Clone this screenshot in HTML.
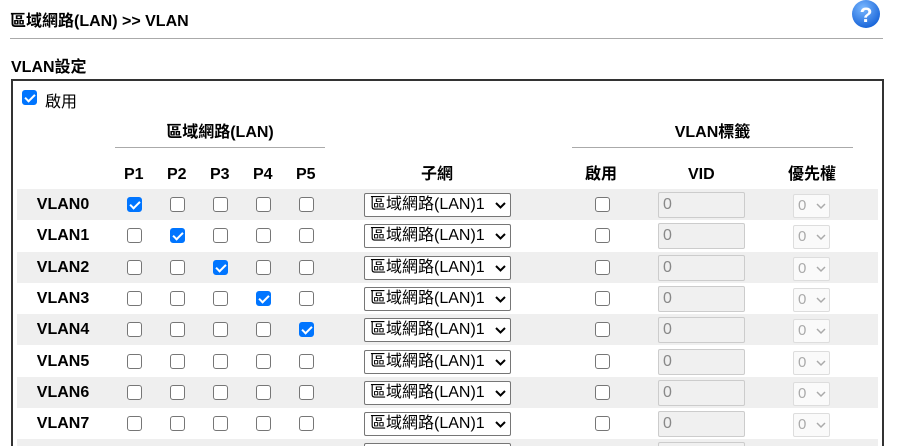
<!DOCTYPE html>
<html style="width:902px;height:446px;overflow:hidden"><head><meta charset="utf-8"><style>
*{box-sizing:border-box;margin:0;padding:0}
body{width:902px;height:446px;overflow:hidden;background:#fff;font-family:"Liberation Sans","Noto Sans CJK TC",sans-serif;color:#000;position:relative}
.a{position:absolute}
.b{font-weight:bold}
.cb{position:absolute;width:15px;height:15px;border:1px solid #767676;border-radius:3px;background:#fff}
.cb.on{background:#0075ff;border-color:#0075ff}
.cb.on:after{content:"";position:absolute;left:4px;top:1px;width:4px;height:8px;border:solid #fff;border-width:0 2px 2px 0;transform:rotate(45deg)}
.row{position:absolute;left:17px;width:861px;height:31px}
.sel{position:absolute;left:347px;top:4px;width:147px;height:24px;border:1px solid #767676;border-radius:2px;background:#fff;font-size:16px;line-height:22px;padding-left:5px}
.sel svg{position:absolute;right:4px;top:8px}
.vid{position:absolute;left:641px;top:3px;width:87px;height:26px;border:1px solid #ccc;border-radius:2px;background:#f0f0f0;color:#888;font-size:16px;line-height:24px;padding-left:4px}
.pr{position:absolute;left:776px;top:5px;width:37px;height:24px;border:1px solid #ddd;border-radius:2px;background:#fafafa;color:#aaa;font-size:15px;line-height:22px;padding-left:4px}
.pr svg{position:absolute;right:3px;top:8px}
.lbl{position:absolute;left:0;width:92px;text-align:center;font-weight:bold;font-size:16px;line-height:31px}
</style></head><body>
<div class="a b" style="left:10px;top:7px;font-size:16px">區域網路(LAN) &gt;&gt; VLAN</div>
<svg class="a" style="left:852px;top:0" width="28" height="28"><defs><radialGradient id="g" cx="40%" cy="30%" r="70%"><stop offset="0" stop-color="#7ab8ff"/><stop offset="1" stop-color="#1a66d9"/></radialGradient></defs><circle cx="14" cy="14" r="14" fill="url(#g)"/><text x="14" y="22" text-anchor="middle" fill="#fff" font-size="21" font-family="Liberation Sans" font-weight="bold">?</text></svg>
<div class="a" style="left:10px;top:38px;width:873px;height:1px;background:#aaa"></div>
<div class="a b" style="left:11px;top:53px;font-size:16px">VLAN設定</div>
<div class="a" style="left:11px;top:79px;width:873px;height:380px;border:2px solid #333"></div>
<div class="cb on" style="left:22px;top:90px"></div>
<div class="a" style="left:45px;top:88px;font-size:16px">啟用</div>
<div class="a b" style="left:115px;top:118px;width:210px;text-align:center;font-size:16px">區域網路(LAN)</div>
<div class="a" style="left:115px;top:147px;width:210px;height:1px;background:#aaa"></div>
<div class="a b" style="left:572px;top:118px;width:281px;text-align:center;font-size:16px">VLAN標籤</div>
<div class="a" style="left:572px;top:147px;width:281px;height:1px;background:#aaa"></div>
<div class="a b" style="left:0;top:165px;width:902px;font-size:16px;line-height:20px">
<span class="a" style="left:124px">P1</span><span class="a" style="left:167px">P2</span><span class="a" style="left:210px">P3</span><span class="a" style="left:253px">P4</span><span class="a" style="left:296px">P5</span>
<span class="a" style="left:421px">子網</span><span class="a" style="left:585px">啟用</span><span class="a" style="left:688px">VID</span><span class="a" style="left:788px">優先權</span></div>
<div class="row" style="top:189px;background:#efefef"><div class="lbl">VLAN0</div><div class="cb on" style="left:110px;top:8px"></div><div class="cb" style="left:153px;top:8px"></div><div class="cb" style="left:196px;top:8px"></div><div class="cb" style="left:239px;top:8px"></div><div class="cb" style="left:282px;top:8px"></div><div class="sel">區域網路(LAN)1<svg width="11" height="8"><path d="M1 1l4.5 4.5L10 1" stroke="#000" stroke-width="2" fill="none"/></svg></div><div class="cb" style="left:578px;top:8px"></div><div class="vid">0</div><div class="pr">0<svg width="10" height="7"><path d="M1 1l4 4 4-4" stroke="#aaa" stroke-width="1.5" fill="none"/></svg></div></div>
<div class="row" style="top:220px"><div class="lbl">VLAN1</div><div class="cb" style="left:110px;top:8px"></div><div class="cb on" style="left:153px;top:8px"></div><div class="cb" style="left:196px;top:8px"></div><div class="cb" style="left:239px;top:8px"></div><div class="cb" style="left:282px;top:8px"></div><div class="sel">區域網路(LAN)1<svg width="11" height="8"><path d="M1 1l4.5 4.5L10 1" stroke="#000" stroke-width="2" fill="none"/></svg></div><div class="cb" style="left:578px;top:8px"></div><div class="vid">0</div><div class="pr">0<svg width="10" height="7"><path d="M1 1l4 4 4-4" stroke="#aaa" stroke-width="1.5" fill="none"/></svg></div></div>
<div class="row" style="top:252px;background:#efefef"><div class="lbl">VLAN2</div><div class="cb" style="left:110px;top:8px"></div><div class="cb" style="left:153px;top:8px"></div><div class="cb on" style="left:196px;top:8px"></div><div class="cb" style="left:239px;top:8px"></div><div class="cb" style="left:282px;top:8px"></div><div class="sel">區域網路(LAN)1<svg width="11" height="8"><path d="M1 1l4.5 4.5L10 1" stroke="#000" stroke-width="2" fill="none"/></svg></div><div class="cb" style="left:578px;top:8px"></div><div class="vid">0</div><div class="pr">0<svg width="10" height="7"><path d="M1 1l4 4 4-4" stroke="#aaa" stroke-width="1.5" fill="none"/></svg></div></div>
<div class="row" style="top:283px"><div class="lbl">VLAN3</div><div class="cb" style="left:110px;top:8px"></div><div class="cb" style="left:153px;top:8px"></div><div class="cb" style="left:196px;top:8px"></div><div class="cb on" style="left:239px;top:8px"></div><div class="cb" style="left:282px;top:8px"></div><div class="sel">區域網路(LAN)1<svg width="11" height="8"><path d="M1 1l4.5 4.5L10 1" stroke="#000" stroke-width="2" fill="none"/></svg></div><div class="cb" style="left:578px;top:8px"></div><div class="vid">0</div><div class="pr">0<svg width="10" height="7"><path d="M1 1l4 4 4-4" stroke="#aaa" stroke-width="1.5" fill="none"/></svg></div></div>
<div class="row" style="top:314px;background:#efefef"><div class="lbl">VLAN4</div><div class="cb" style="left:110px;top:8px"></div><div class="cb" style="left:153px;top:8px"></div><div class="cb" style="left:196px;top:8px"></div><div class="cb" style="left:239px;top:8px"></div><div class="cb on" style="left:282px;top:8px"></div><div class="sel">區域網路(LAN)1<svg width="11" height="8"><path d="M1 1l4.5 4.5L10 1" stroke="#000" stroke-width="2" fill="none"/></svg></div><div class="cb" style="left:578px;top:8px"></div><div class="vid">0</div><div class="pr">0<svg width="10" height="7"><path d="M1 1l4 4 4-4" stroke="#aaa" stroke-width="1.5" fill="none"/></svg></div></div>
<div class="row" style="top:346px"><div class="lbl">VLAN5</div><div class="cb" style="left:110px;top:8px"></div><div class="cb" style="left:153px;top:8px"></div><div class="cb" style="left:196px;top:8px"></div><div class="cb" style="left:239px;top:8px"></div><div class="cb" style="left:282px;top:8px"></div><div class="sel">區域網路(LAN)1<svg width="11" height="8"><path d="M1 1l4.5 4.5L10 1" stroke="#000" stroke-width="2" fill="none"/></svg></div><div class="cb" style="left:578px;top:8px"></div><div class="vid">0</div><div class="pr">0<svg width="10" height="7"><path d="M1 1l4 4 4-4" stroke="#aaa" stroke-width="1.5" fill="none"/></svg></div></div>
<div class="row" style="top:377px;background:#efefef"><div class="lbl">VLAN6</div><div class="cb" style="left:110px;top:8px"></div><div class="cb" style="left:153px;top:8px"></div><div class="cb" style="left:196px;top:8px"></div><div class="cb" style="left:239px;top:8px"></div><div class="cb" style="left:282px;top:8px"></div><div class="sel">區域網路(LAN)1<svg width="11" height="8"><path d="M1 1l4.5 4.5L10 1" stroke="#000" stroke-width="2" fill="none"/></svg></div><div class="cb" style="left:578px;top:8px"></div><div class="vid">0</div><div class="pr">0<svg width="10" height="7"><path d="M1 1l4 4 4-4" stroke="#aaa" stroke-width="1.5" fill="none"/></svg></div></div>
<div class="row" style="top:408px"><div class="lbl">VLAN7</div><div class="cb" style="left:110px;top:8px"></div><div class="cb" style="left:153px;top:8px"></div><div class="cb" style="left:196px;top:8px"></div><div class="cb" style="left:239px;top:8px"></div><div class="cb" style="left:282px;top:8px"></div><div class="sel">區域網路(LAN)1<svg width="11" height="8"><path d="M1 1l4.5 4.5L10 1" stroke="#000" stroke-width="2" fill="none"/></svg></div><div class="cb" style="left:578px;top:8px"></div><div class="vid">0</div><div class="pr">0<svg width="10" height="7"><path d="M1 1l4 4 4-4" stroke="#aaa" stroke-width="1.5" fill="none"/></svg></div></div>
<div class="row" style="top:439px;background:#efefef"><div class="sel"></div><div class="vid"></div></div>
</body></html>
